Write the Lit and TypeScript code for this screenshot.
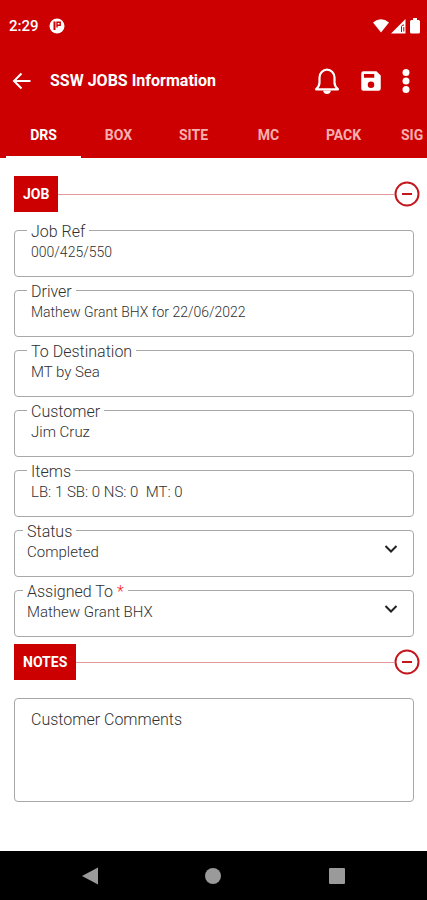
import { LitElement, html, svg, css } from "lit";
import { customElement, state } from "lit/decorators.js";
import { classMap } from "lit/directives/class-map.js";

const TABS = ["DRS", "BOX", "SITE", "MC", "PACK", "SIG"];

const FIELDS = [
  { id: "ref", label: "Job Ref", value: "000/425/550", compact: true },
  { id: "driver", label: "Driver", value: "Mathew Grant BHX for 22/06/2022", compact: true },
  { id: "destination", label: "To Destination", value: "MT by Sea", compact: false },
  { id: "customer", label: "Customer", value: "Jim Cruz", compact: false },
  { id: "items", label: "Items", value: "LB: 1 SB: 0 NS: 0\u00a0 MT: 0", compact: false },
];

const SELECTS = [
  { id: "status", label: "Status", value: "Completed", required: false },
  { id: "assigned", label: "Assigned To", value: "Mathew Grant BHX", required: true },
];

const minus = svg`
  <circle cx="13" cy="13" r="11.5" fill="none" stroke="#c4161c" stroke-width="2" />
  <path d="M8 13h10" stroke="#c4161c" stroke-width="2" />`;

@customElement("app-root")
export class AppRoot extends LitElement {
  @state() private active = "DRS";
  @state() private jobOpen = true;
  @state() private notesOpen = true;

  static styles = css`
    :host {
      display: flex;
      flex-direction: column;
      min-height: 100vh;
      background: #fff;
      font-family: Roboto, "Liberation Sans", sans-serif;
      color: #303030;
    }
    * {
      box-sizing: border-box;
    }
    svg {
      display: block;
      flex: none;
    }
    button {
      border: 0;
      padding: 0;
      background: none;
      color: inherit;
      font: inherit;
      cursor: pointer;
    }
    header {
      background: #cc0000;
      color: #fff;
    }
    .status {
      display: flex;
      align-items: center;
      height: 52px;
      padding: 0 5px 0 9px;
      font-size: 15px;
      font-weight: 500;
    }
    .app {
      margin-left: 10px;
    }
    .signals {
      display: flex;
      align-items: center;
      gap: 2px;
      margin-left: auto;
    }
    .bar {
      display: flex;
      align-items: center;
      height: 58px;
      padding: 0 17px 0 12px;
    }
    h1 {
      flex: 1;
      margin: 0 0 0 18px;
      font-size: 16px;
      font-weight: 700;
      line-height: 24px;
      white-space: nowrap;
    }
    .actions {
      display: flex;
      align-items: center;
      gap: 18px;
    }
    .tabs {
      display: flex;
      height: 48px;
      padding-left: 6px;
      overflow: hidden;
    }
    .tab {
      flex: 0 0 75px;
      padding-top: 4px;
      border-bottom: 2px solid transparent;
      color: #f6b0b0;
      font-size: 14px;
      font-weight: 700;
    }
    .tab:last-child {
      flex: 1 0 64px;
      padding-left: 20px;
      text-align: left;
    }
    .tab.on {
      color: #fff;
      border-color: #fff;
    }
    main {
      flex: 1;
      padding-top: 18px;
    }
    .section {
      display: flex;
      align-items: center;
      padding: 0 7px 0 14px;
    }
    h2 {
      margin: 0;
      padding: 0 9px;
      background: #cc0000;
      color: #fff;
      font-size: 14px;
      font-weight: 700;
      line-height: 36px;
    }
    .rule {
      flex: 1;
      height: 1px;
      background: #e29a9a;
    }
    .fields {
      display: flex;
      flex-direction: column;
      gap: 3px;
      padding: 8px 13px 7px 14px;
    }
    fieldset {
      position: relative;
      min-width: 0;
      height: 57px;
      margin: 0;
      padding: 0 12px;
      border: 1px solid #a8a8a8;
      border-radius: 4px;
    }
    legend {
      padding: 4px 4px 0;
      font-size: 16px;
      font-weight: 300;
      line-height: 16px;
    }
    .box {
      display: block;
      width: 100%;
      height: 24px;
      padding: 0 4px;
      border: 0;
      outline: 0;
      background: none;
      color: #303030;
      font: 300 15px/24px Roboto, "Liberation Sans", sans-serif;
      appearance: none;
    }
    .compact {
      font-size: 14px;
    }
    .pick {
      padding: 0 8px;
    }
    .chevron {
      position: absolute;
      right: 15px;
      top: 4px;
      pointer-events: none;
    }
    .star {
      color: #ff1a1a;
    }
    .notes {
      padding: 18px 13px 16px 14px;
    }
    textarea {
      display: block;
      width: 100%;
      height: 104px;
      padding: 11px 16px;
      border: 1px solid #a8a8a8;
      border-radius: 4px;
      outline: 0;
      resize: none;
      background: none;
      font: 300 16px/20px Roboto, "Liberation Sans", sans-serif;
      color: #303030;
    }
    textarea::placeholder {
      color: #303030;
    }
    .nav {
      display: flex;
      justify-content: space-around;
      align-items: center;
      height: 49px;
      padding: 0 28px;
      background: #000;
    }
  `;

  private heading(text: string, open: boolean, toggle: () => void) {
    return html`
      <div class="section">
        <h2>${text}</h2>
        <span class="rule"></span>
        <button aria-label="Toggle ${text}" aria-expanded=${open} @click=${toggle}>
          <svg width="26" height="26" viewBox="0 0 26 26">${minus}</svg>
        </button>
      </div>
    `;
  }

  render() {
    return html`
      <header>
        <div class="status">
          <span>2:29</span>
          <svg class="app" width="16" height="16" viewBox="0 0 16 16">
            <circle cx="8" cy="8" r="7.5" fill="#fff" />
            <path d="M5.500 3.500v8.500" stroke="#c00" stroke-width="2" />
            <path d="M8 9.500V4.200h3.200v3H8.500" fill="none" stroke="#c00" stroke-width="1.400" />
          </svg>
          <div class="signals">
            <svg width="16" height="14" viewBox="0 0 16 14">
              <path d="M0 3.600Q8-3 16 3.600L8 13.500z" fill="#fff" />
            </svg>
            <svg width="15" height="15" viewBox="0 0 15 15">
              <path d="M0 14.500L14.500 0v14.500z" fill="#fff" />
              <path d="M10.500 13V7.500q0-1.500 2.500-1.500M12.800 8v4.500" fill="none" stroke="#c00" stroke-width="1" />
            </svg>
            <svg width="14" height="16" viewBox="0 0 14 16">
              <path d="M5 0h4v2h1.500q1.500 0 1.500 1.500v10.500q0 1.500-1.500 1.500h-7q-1.500 0-1.500-1.500V3.500Q2 2 3.500 2H5z" fill="#fff" />
            </svg>
          </div>
        </div>
        <div class="bar">
          <button aria-label="Back">
            <svg width="20" height="18" viewBox="0 0 20 18" fill="none" stroke="#fff" stroke-width="2">
              <path d="M9.500 1.500L2 9l7.500 7.500M2 9h16.500" />
            </svg>
          </button>
          <h1>SSW JOBS Information</h1>
          <div class="actions">
            <button aria-label="Notifications">
              <svg width="26" height="28" viewBox="0 0 26 28">
                <path
                  d="M2 22.300Q5.500 19 5.500 15.500V10.500a7.500 7.800 0 0 1 15 0v5q0 3.500 3.500 6.800z"
                  fill="none" stroke="#fff" stroke-width="2.200" stroke-linejoin="round" />
                <path d="M9 23.500h8q-.8 3.500-4 3.500t-4-3.500z" fill="#fff" />
              </svg>
            </button>
            <button aria-label="Save">
              <svg width="26" height="26" viewBox="0 0 24 24">
                <path
                  d="M17 3H5a2 2 0 0 0-2 2v14a2 2 0 0 0 2 2h14a2 2 0 0 0 2-2V7zM12 18.500a3 3 0 1 1 0-6 3 3 0 0 1 0 6zM15 9H5.500V5.500H15z"
                  fill="#fff" />
              </svg>
            </button>
            <button aria-label="More options">
              <svg width="8" height="26" viewBox="0 0 8 26" fill="#fff">
                <circle cx="4" cy="4.500" r="3.500" />
                <circle cx="4" cy="13" r="3.500" />
                <circle cx="4" cy="21.500" r="3.500" />
              </svg>
            </button>
          </div>
        </div>
        <nav class="tabs" role="tablist">
          ${TABS.map(
            (t) => html`<button
              role="tab"
              class=${classMap({ tab: true, on: t === this.active })}
              aria-selected=${t === this.active}
              @click=${() => (this.active = t)}
            >${t}</button>`
          )}
        </nav>
      </header>
      <main>
        ${this.heading("JOB", this.jobOpen, () => (this.jobOpen = !this.jobOpen))}
        ${this.jobOpen
          ? html`<div class="fields">
              ${FIELDS.map(
                (f) => html`<fieldset>
                  <legend><label for=${f.id}>${f.label}</label></legend>
                  <input class=${classMap({ box: true, compact: f.compact })} id=${f.id} .value=${f.value} />
                </fieldset>`
              )}
              ${SELECTS.map(
                (f) => html`<fieldset class="pick">
                  <legend>
                    <label for=${f.id}>${f.label}${f.required ? html` <span class="star">*</span>` : ""}</label>
                  </legend>
                  <select class="box" id=${f.id}>
                    <option>${f.value}</option>
                  </select>
                  <svg class="chevron" width="14" height="10" viewBox="0 0 14 10">
                    <path d="M1.500 2L7 7.500 12.500 2" fill="none" stroke="#222" stroke-width="2" />
                  </svg>
                </fieldset>`
              )}
            </div>`
          : ""}
        ${this.heading("NOTES", this.notesOpen, () => (this.notesOpen = !this.notesOpen))}
        ${this.notesOpen
          ? html`<div class="notes">
              <textarea aria-label="Customer Comments" placeholder="Customer Comments"></textarea>
            </div>`
          : ""}
      </main>
      <footer class="nav">
        <button aria-label="System back">
          <svg width="18" height="18" viewBox="0 0 18 18"><path d="M1 9L17 .5v17z" fill="#9a9a9a" /></svg>
        </button>
        <button aria-label="Home">
          <svg width="18" height="18" viewBox="0 0 18 18"><circle cx="9" cy="9" r="8" fill="#9a9a9a" /></svg>
        </button>
        <button aria-label="Recent apps">
          <svg width="18" height="18" viewBox="0 0 18 18"><rect x="1" y="1" width="16" height="16" rx="1" fill="#9a9a9a" /></svg>
        </button>
      </footer>
    `;
  }
}
